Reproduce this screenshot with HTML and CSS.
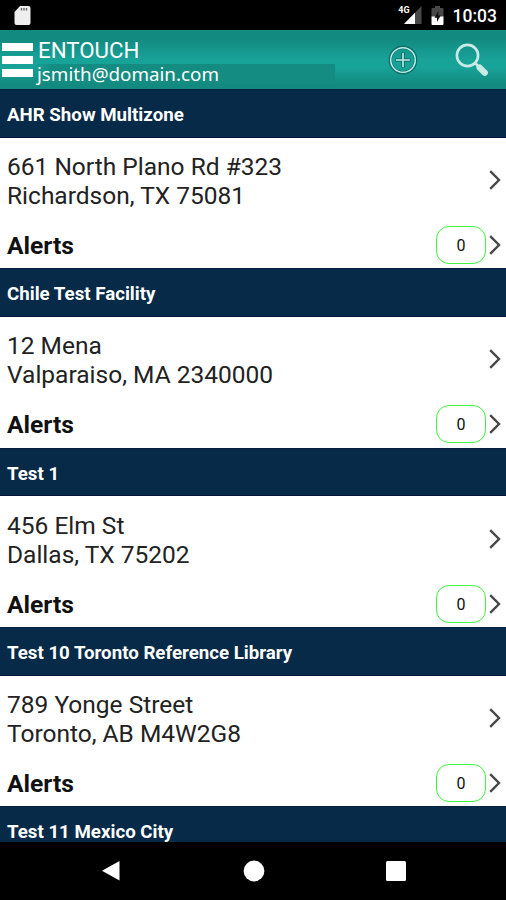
FILE: index.html
```html
<!DOCTYPE html>
<html lang="en">
<head>
<meta charset="UTF-8">
<meta name="viewport" content="width=device-width, initial-scale=1.0">
<title>Entouch</title>
<link rel="stylesheet" href="styles.css">
</head>
<body>

<!-- shared icons -->
<svg class="sprite" width="0" height="0">
    <symbol id="chevron" viewBox="0 0 12 20">
        <path d="M1.2 1.2 L10 10 L1.2 18.8" fill="none" stroke="#484848" stroke-width="2.4"/>
    </symbol>
</svg>

<div class="status-bar">
    <svg class="sd-icon" width="17" height="19" viewBox="0 0 17 19">
        <path d="M6 0 H14.5 Q16.5 0 16.5 2 V17 Q16.5 19 14.5 19 H2.5 Q0.5 19 0.5 17 V6 Z" fill="#eee"/>
        <path d="M7.5 2 V4.5 M10 2 V4.5 M12.5 2 V4.5" stroke="#666" stroke-width="1.4"/>
    </svg>
    <div class="status-right">
        <span class="network">4G</span>
        <svg class="signal-icon" width="18" height="18" viewBox="0 0 18 18">
            <path d="M17.5 0 V18 H0 Z" fill="#484848"/>
            <path d="M11 6.7 V18 H0 Z" fill="#fff"/>
        </svg>
        <svg class="battery-icon" width="13" height="19" viewBox="0 0 13 19">
            <path d="M4 0 H9 V2 H11.5 Q12.5 2 12.5 3 V11 H0.5 V3 Q0.5 2 1.5 2 H4 Z" fill="#484848"/>
            <path d="M0.5 10.5 H12.5 V18 Q12.5 19 11.5 19 H1.5 Q0.5 19 0.5 18 Z" fill="#fff"/>
            <path d="M7.3 5 L3.5 11.7 H6 V16 L9.7 9.5 H7.3 Z" fill="#111"/>
        </svg>
        <span class="clock">10:03</span>
    </div>
</div>

<header class="app-bar">
    <div class="menu-icon"><span></span><span></span><span></span></div>
    <div class="account">
        <div class="brand">ENTOUCH</div>
        <div class="email">jsmith@domain.com</div>
    </div>
    <svg class="add-icon" width="30" height="30" viewBox="0 0 30 30" fill="none">
        <circle cx="15" cy="15" r="12.7" stroke="#0d706c" stroke-width="3.4"/>
        <circle cx="15" cy="15" r="12.3" stroke="#c3ece7" stroke-width="1.5"/>
        <path d="M15 7.4 V22.6 M7.4 15 H22.6" stroke="#0d706c" stroke-width="3.6"/>
        <path d="M15 8 V22 M8 15 H22" stroke="#c3ece7" stroke-width="1.6"/>
    </svg>
    <svg class="search-icon" width="34" height="34" viewBox="0 0 34 34" fill="none">
        <circle cx="12.5" cy="12.5" r="10.6" stroke="#c9ebe7" stroke-width="2.6"/>
        <path d="M20 20 L25 25" stroke="#c9ebe7" stroke-width="2.6"/>
        <path d="M24.6 24.6 L29.8 29.8" stroke="#c9ebe7" stroke-width="6.2" stroke-linecap="round"/>
    </svg>
</header>

<main class="site-list">
    <section class="site">
        <h2>AHR Show Multizone</h2>
        <div class="address-row">
            <p>661 North Plano Rd #323<br>Richardson, TX 75081</p>
            <svg class="chevron"><use href="#chevron"/></svg>
        </div>
        <div class="alerts-row">
            <span class="label">Alerts</span>
            <span class="count">0</span>
            <svg class="chevron"><use href="#chevron"/></svg>
        </div>
    </section>

    <section class="site">
        <h2>Chile Test Facility</h2>
        <div class="address-row">
            <p>12 Mena<br>Valparaiso, MA 2340000</p>
            <svg class="chevron"><use href="#chevron"/></svg>
        </div>
        <div class="alerts-row">
            <span class="label">Alerts</span>
            <span class="count">0</span>
            <svg class="chevron"><use href="#chevron"/></svg>
        </div>
    </section>

    <section class="site">
        <h2>Test 1</h2>
        <div class="address-row">
            <p>456 Elm St<br>Dallas, TX 75202</p>
            <svg class="chevron"><use href="#chevron"/></svg>
        </div>
        <div class="alerts-row">
            <span class="label">Alerts</span>
            <span class="count">0</span>
            <svg class="chevron"><use href="#chevron"/></svg>
        </div>
    </section>

    <section class="site">
        <h2>Test 10 Toronto Reference Library</h2>
        <div class="address-row">
            <p>789 Yonge Street<br>Toronto, AB M4W2G8</p>
            <svg class="chevron"><use href="#chevron"/></svg>
        </div>
        <div class="alerts-row">
            <span class="label">Alerts</span>
            <span class="count">0</span>
            <svg class="chevron"><use href="#chevron"/></svg>
        </div>
    </section>

    <section class="site">
        <h2>Test 11 Mexico City</h2>
    </section>
</main>

<nav class="nav-bar">
    <svg width="20" height="22" viewBox="0 0 20 22"><path d="M18.5 1 V20.5 L1 10.8 Z" fill="#fff"/></svg>
    <svg width="22" height="22" viewBox="0 0 22 22"><circle cx="11" cy="11" r="10.4" fill="#fff"/></svg>
    <svg width="20" height="20" viewBox="0 0 20 20"><rect width="20" height="20" rx="1.5" fill="#fff"/></svg>
</nav>

</body>
</html>
```

FILE: styles.css
```css
* {
    box-sizing: border-box;
}
body {
    margin: 0;
    height: 900px;
    display: flex;
    flex-direction: column;
    overflow: hidden;
    font-family: Roboto, sans-serif;
    background-color: #fff;
}
.sprite {
    position: absolute;
}

/* status bar */
.status-bar {
    flex: none;
    height: 30px;
    padding: 0 9px 0 14px;
    display: flex;
    align-items: center;
    justify-content: space-between;
    background-color: #000;
    color: #fff;
}
.status-right {
    display: flex;
    align-items: center;
}
.network {
    align-self: flex-start;
    margin-top: 1px;
    margin-right: -6px;
    font-size: 9px;
    line-height: 9px;
    font-weight: bold;
    z-index: 1;
}
.battery-icon {
    margin-left: 9px;
}
.clock {
    margin-left: 9px;
    padding-top: 1px;
    font-size: 17.5px;
    font-weight: 500;
    line-height: 20px;
}

/* app bar */
.app-bar {
    flex: none;
    height: 59.2px;
    display: flex;
    align-items: center;
    padding-right: 17px;
    background: linear-gradient(#138a80 0, #138a80 9px, #18a399 30px, #18a399 37px, #138a80 54px, #138a80 100%);
    color: #fff;
}
.menu-icon {
    width: 33px;
    padding-left: 2px;
    display: flex;
    flex-direction: column;
    gap: 5px;
}
.menu-icon span {
    height: 8px;
    background-color: #fff;
}
.account {
    align-self: stretch;
    width: 302px;
}
.brand {
    height: 34px;
    padding: 9px 0 0 5px;
    font-size: 22.3px;
    line-height: 23px;
}
.email {
    height: 20px;
    padding-left: 4px;
    background: linear-gradient(90deg, #148c8200, #148c82 20px);
    font-family: "Noto Sans", sans-serif;
    font-size: 18.8px;
    line-height: 20px;
}
.add-icon {
    margin-left: 53px;
}
.search-icon {
    margin-left: auto;
}

/* sites */
.site-list {
    flex: 1;
    min-height: 0;
    overflow: hidden;
}
.site {
    height: 179.3px;
}
.site h2 {
    height: 48.5px;
    margin: 0;
    padding-left: 7px;
    border-top: 1px solid #03203f;
    border-bottom: 1.5px solid #06133a;
    background-color: #062a47;
    color: #fff;
    font-size: 18.7px;
    font-weight: bold;
    line-height: 50px;
}
.address-row {
    height: 85px;
    padding: 0 5px 0 7px;
    display: flex;
    align-items: center;
    justify-content: space-between;
}
.address-row p {
    margin: 2px 0 0;
    font-size: 24.5px;
    line-height: 29px;
    color: #222;
}
.alerts-row {
    height: 45px;
    padding: 0 5px 0 7px;
    display: flex;
    align-items: center;
}
.label {
    flex: 1;
    padding-top: 1px;
    font-size: 24.6px;
    font-weight: bold;
    color: #111;
}
.count {
    width: 50px;
    height: 38px;
    margin-right: 3px;
    border: 1.5px solid #3df53d;
    border-radius: 13px;
    text-align: center;
    font-size: 16px;
    line-height: 37px;
    color: #111;
}
.chevron {
    width: 12px;
    height: 20px;
}

/* navigation bar */
.nav-bar {
    flex: none;
    height: 58px;
    padding: 0 100px 0 101px;
    display: flex;
    align-items: center;
    justify-content: space-between;
    background-color: #000;
}
```
